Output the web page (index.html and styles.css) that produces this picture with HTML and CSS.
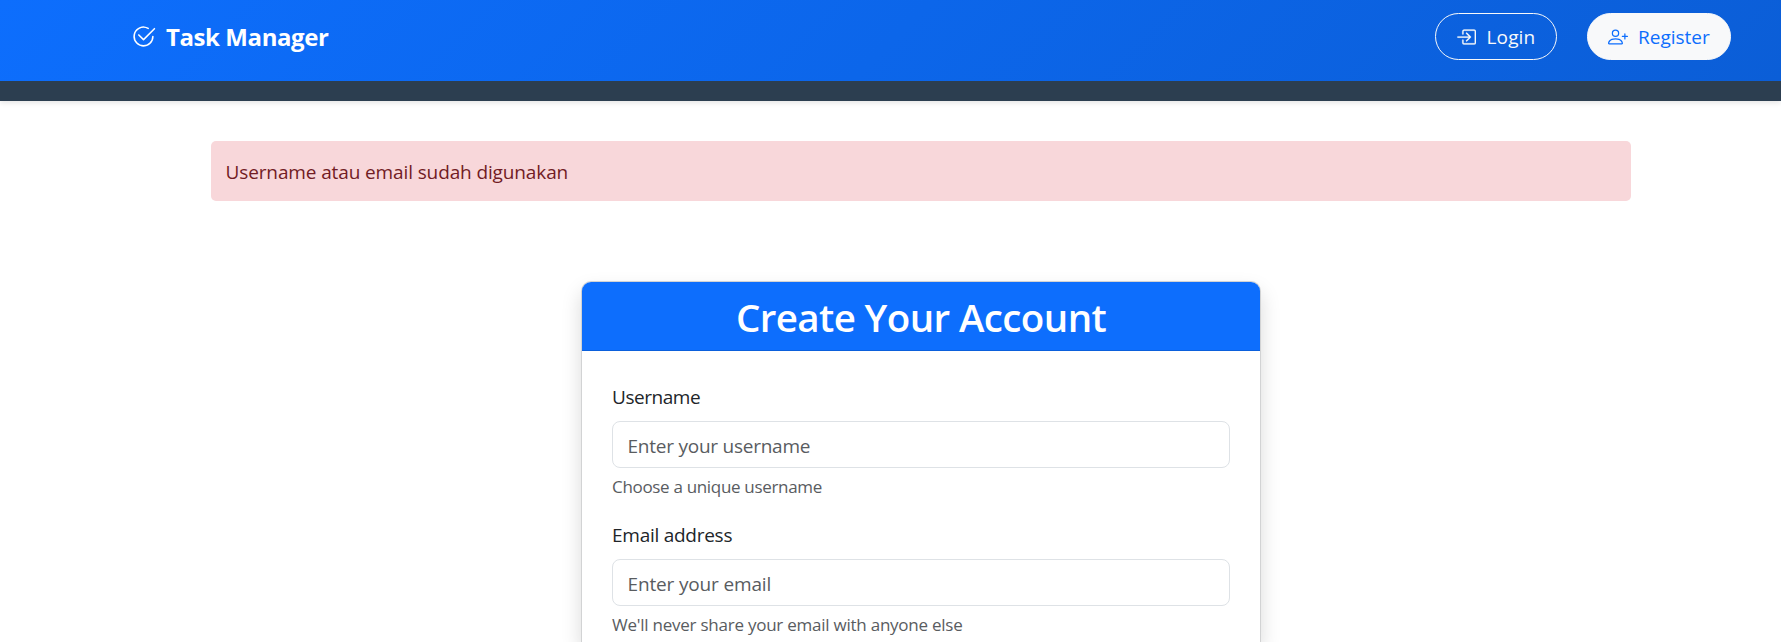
FILE: index.html
```html
<!DOCTYPE html>
<html lang="id">
<head>
<meta charset="utf-8">
<title>Task Manager</title>
<link rel="stylesheet" href="styles.css">
</head>
<body>
<header class="site-header">
  <nav class="navbar">
    <a class="brand"><svg class="brand-icon" viewBox="0 0 16 16" fill="currentColor"><path d="M2.5 8a5.5 5.5 0 0 1 8.25-4.764.5.5 0 0 0 .5-.866A6.5 6.5 0 1 0 14.5 8a.5.5 0 0 0-1 0 5.5 5.5 0 1 1-11 0"/><path d="M15.354 3.354a.5.5 0 0 0-.708-.708L8 9.293 5.354 6.646a.5.5 0 1 0-.708.708l3 3a.5.5 0 0 0 .708 0z"/></svg><span>Task Manager</span></a>
    <div class="actions">
      <a class="btn btn-login"><svg class="icon icon-login" viewBox="0 0 16 16" fill="currentColor"><path d="M6 3.5a.5.5 0 0 1 .5-.5h8a.5.5 0 0 1 .5.5v9a.5.5 0 0 1-.5.5h-8a.5.5 0 0 1-.5-.5v-2a.5.5 0 0 0-1 0v2A1.5 1.5 0 0 0 6.5 14h8a1.5 1.5 0 0 0 1.5-1.5v-9A1.5 1.5 0 0 0 14.5 2h-8A1.5 1.5 0 0 0 5 3.5v2a.5.5 0 0 0 1 0z"/><path d="M11.854 8.354a.5.5 0 0 0 0-.708l-3-3a.5.5 0 1 0-.708.708L10.293 7.5H1.5a.5.5 0 0 0 0 1h8.793l-2.147 2.146a.5.5 0 0 0 .708.708z"/></svg><span>Login</span></a>
      <a class="btn btn-register"><svg class="icon" viewBox="0 0 16 16" fill="currentColor"><path d="M6 8a3 3 0 1 0 0-6 3 3 0 0 0 0 6m2-3a2 2 0 1 1-4 0 2 2 0 0 1 4 0m4 8c0 1-1 1-1 1H1s-1 0-1-1 1-4 6-4 6 3 6 4m-1-.004c-.001-.246-.154-.986-.832-1.664C9.516 10.68 8.289 10 6 10s-3.516.68-4.168 1.332c-.678.678-.83 1.418-.832 1.664z"/><path d="M13.5 5a.5.5 0 0 1 .5.5V7h1.5a.5.5 0 0 1 0 1H14v1.5a.5.5 0 0 1-1 0V8h-1.5a.5.5 0 0 1 0-1H13V5.5a.5.5 0 0 1 .5-.5"/></svg><span>Register</span></a>
    </div>
  </nav>
</header>
<main class="container">
  <div class="alert"><span>Username atau email sudah digunakan</span></div>
  <section class="card">
    <div class="card-header"><h1 class="card-title">Create Your Account</h1></div>
    <form class="card-body">
      <div class="field">
        <label class="label label-username" for="username">Username</label>
        <input class="input input-username" id="username" type="text" placeholder="Enter your username">
        <div class="help">Choose a unique username</div>
      </div>
      <div class="field">
        <label class="label label-email" for="email">Email address</label>
        <input class="input input-email" id="email" type="email" placeholder="Enter your email">
        <div class="help help-email">We'll never share your email with anyone else</div>
      </div>
    </form>
  </section>
</main>
</body>
</html>
```
FILE: styles.css
```css
* { box-sizing: border-box; }
html { overflow: hidden; }
body {
  display: flex;
  flex-direction: column;
  margin: 0;
  height: 642px;
  overflow: hidden;
  background: #fff;
  color: #212529;
  font-family: "Open Sans", "Noto Sans", sans-serif;
  font-size: 19px;
  line-height: 30px;
}
.site-header {
  flex: none;
  height: 101px;
  padding-bottom: 20px;
  background: #2c3e50;
  box-shadow: 0 2px 5px rgba(0, 0, 0, .1);
}
.navbar {
  display: flex;
  align-items: flex-start;
  justify-content: space-between;
  height: 81px;
  padding: 13px 50px 0 130.5px;
  background: linear-gradient(135deg, #0d6efd, #0b5ed7);
}
.brand {
  display: flex;
  align-items: center;
  gap: 10.5px;
  height: 47px;
  color: #fff;
  font-size: 24px;
  font-weight: 700;
  letter-spacing: -.42px;
}
.brand-icon { width: 25px; height: 25px; }
.actions { display: flex; gap: 30px; }
.btn {
  display: flex;
  align-items: center;
  height: 47px;
  padding-left: 20px;
  border: 1px solid #f8f9fa;
  border-radius: 24px;
  color: #f8f9fa;
  white-space: nowrap;
}
.btn-login { width: 122px; gap: 10.5px; letter-spacing: .15px; }
.btn-register { width: 144px; gap: 10px; background: #f8f9fa; color: #0d6efd; }
.icon { width: 20px; height: 20px; }
.icon-login { stroke: currentColor; stroke-width: .2; }
.container { width: 1420px; margin: 40px 0 0 211px; }
.alert {
  height: 60px;
  padding: 16px 14.5px;
  border-radius: 5px;
  background: #f8d7da;
  color: #721c24;
  letter-spacing: -.12px;
}
.card {
  width: 680px;
  height: 361px;
  margin: 80px auto 0;
  border: 1px solid #d2d3d4;
  border-bottom: 0;
  border-radius: 10px 10px 0 0;
  background: #fff;
  box-shadow: 0 10px 20px rgba(0, 0, 0, .15);
}
.card-header {
  height: 69px;
  padding-top: 11px;
  background: #0d6efd;
  border-radius: 9px 9px 0 0;
  box-shadow: inset 0 -1px #0b60dc;
}
.card-title {
  margin: 0;
  color: #fff;
  font-size: 38.5px;
  font-weight: 600;
  line-height: 48px;
  letter-spacing: -.6px;
  text-align: center;
}
.card-body { padding: 30px 30px 0; }
.field { display: flex; flex-direction: column; height: 138px; }
.field:last-child { height: 127px; }
.label { height: 40px; padding-top: 1px; }
.label-username { letter-spacing: -.45px; }
.label-email { letter-spacing: -.26px; }
.input {
  width: 618px;
  height: 47px;
  padding: 2px 14.5px 0;
  border: 1px solid #dee2e6;
  border-radius: 8px;
  background: #fff;
  font: inherit;
}
.input-username { letter-spacing: -.24px; }
.input-email { letter-spacing: -.15px; }
.input::placeholder { color: #595c5f; opacity: 1; }
.help {
  height: 27px;
  margin-top: 5px;
  color: #595c5f;
  font-size: 17px;
  line-height: 27px;
  letter-spacing: -.32px;
}
.help-email { letter-spacing: -.24px; }
```
